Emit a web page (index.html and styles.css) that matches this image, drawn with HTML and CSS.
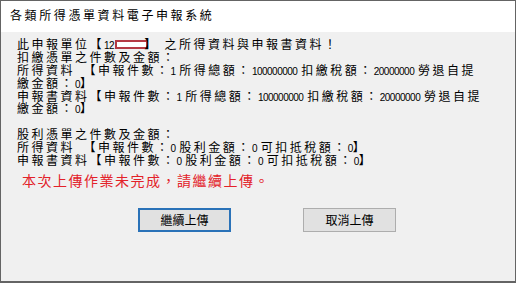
FILE: index.html
```html
<!DOCTYPE html>
<html lang="zh-Hant">
<head>
<meta charset="utf-8">
<link rel="stylesheet" href="styles.css">
</head>
<body>
<div class="window">
  <div class="titlebar">各類所得憑單資料電子申報系統</div>
  <div class="content">
    <div class="msg">
      <div class="line">此申報單位【<span class="n">12</span><span class="redact"></span>】 之所得資料與申報書資料！</div>
      <div class="line">扣繳憑單之件數及金額：</div>
      <div class="line">所得資料　【申報件數：<span class="n">1 </span>所得總額：<span class="n">100000000 </span>扣繳稅額：<span class="n">20000000 </span>勞退自提</div>
      <div class="line">繳金額：<span class="n">0</span>】</div>
      <div class="line">申報書資料【申報件數：<span class="n">1 </span>所得總額：<span class="n">100000000 </span>扣繳稅額：<span class="n">20000000 </span>勞退自提</div>
      <div class="line">繳金額：<span class="n">0</span>】</div>
      <div class="line blank"></div>
      <div class="line">股利憑單之件數及金額：</div>
      <div class="line">所得資料　【申報件數：<span class="n">0 </span>股利金額：<span class="n">0 </span>可扣抵稅額：<span class="n">0</span>】</div>
      <div class="line">申報書資料【申報件數：<span class="n">0 </span>股利金額：<span class="n">0 </span>可扣抵稅額：<span class="n">0</span>】</div>
    </div>
    <div class="warn">本次上傳作業未完成，請繼續上傳。</div>
    <div class="buttons">
      <button class="btn primary">繼續上傳</button>
      <button class="btn">取消上傳</button>
    </div>
  </div>
</div>
</body>
</html>
```
FILE: styles.css
```css
html, body {
  margin: 0;
  padding: 0;
  background: #f0f0f0;
}
.window {
  width: 516px;
  height: 283px;
  box-sizing: border-box;
  border: 1px solid #646464;
  border-bottom-width: 2px;
  display: flex;
  flex-direction: column;
  background: #f0f0f0;
  font-family: "Liberation Sans", "Noto Sans CJK TC", sans-serif;
  color: #000;
}
.titlebar {
  height: 31px;
  flex: none;
  background: #fff;
  font-size: 12px;
  letter-spacing: 2.6px;
  line-height: 31px;
  padding-left: 9px;
}
.content {
  flex: 1;
  padding: 7px 0 0 16px;
  display: flex;
  flex-direction: column;
}
.msg {
  font-size: 12px;
  letter-spacing: 2.5px;
  line-height: 12.9px;
}
.line {
  white-space: pre;
  height: 12.9px;
}
.n {
  font-size: 10px;
  letter-spacing: -0.5px;
  word-spacing: 1.5px;
}
.redact {
  display: inline-block;
  width: 29px;
  height: 5px;
  background: #fff;
  border: 2px solid #b43a44;
  vertical-align: 0;
  margin-left: 1px;
  margin-right: -4px;
}
.warn {
  margin-top: 5px;
  margin-left: 5px;
  font-size: 14px;
  letter-spacing: 1.5px;
  line-height: 16px;
  color: #e32229;
  white-space: nowrap;
}
.buttons {
  display: flex;
  gap: 72px;
  margin-top: 19px;
  margin-left: 121px;
}
.btn {
  width: 93px;
  height: 24px;
  box-sizing: border-box;
  background: #e1e1e1;
  border: 1px solid #adadad;
  font-family: "Liberation Sans", "Noto Sans CJK TC", sans-serif;
  font-size: 12px;
  color: #000;
  padding: 0;
  margin: 0;
}
.btn.primary {
  border: 2px solid #2a72b8;
}
```
